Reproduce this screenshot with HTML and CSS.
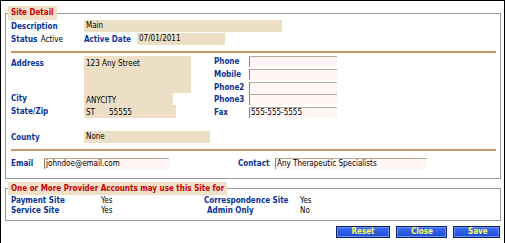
FILE: index.html
```html
<!DOCTYPE html>
<html>
<head>
<meta charset="utf-8">
<link rel="stylesheet" href="styles.css">
</head>
<body>
<div class="frame">
  <fieldset class="box box-detail">
    <legend class="legend">Site Detail</legend>
    <div class="content">
      <div class="top-grid">
        <span class="lbl">Description</span>
        <span class="fld tan f-desc">Main</span>
        <span class="status"><span class="lbl">Status</span> <span class="val">Active</span></span>
        <span class="date-wrap"><span class="lbl lbl-date">Active Date</span><span class="fld tan f-date">07/01/2011</span></span>
      </div>
      <div class="divider"></div>
      <div class="addr-section">
        <div class="addr-grid">
          <span class="lbl addr-lbl">Address</span>
          <span class="fld tan f-addr">123 Any Street</span>
          <span class="lbl bottom-lbl">City</span>
          <span class="fld tan f-city">ANYCITY</span>
          <span class="lbl bottom-lbl">State/Zip</span>
          <span class="fld tan f-state"><span class="st">ST</span><span>55555</span></span>
        </div>
        <div class="phone-grid">
          <span class="lbl">Phone</span><span class="fld inset f-phone"></span>
          <span class="lbl">Mobile</span><span class="fld inset f-phone"></span>
          <span class="lbl">Phone2</span><span class="fld inset f-phone"></span>
          <span class="lbl">Phone3</span><span class="fld inset f-phone"></span>
          <span class="lbl">Fax</span><span class="fld inset f-phone">555-555-5555</span>
        </div>
      </div>
      <div class="county-row">
        <span class="lbl">County</span>
        <span class="fld tan f-county">None</span>
      </div>
      <div class="divider divider-2"></div>
      <div class="contact-row">
        <span class="lbl">Email</span>
        <span class="fld inset f-email">johndoe@email.com</span>
        <span class="lbl lbl-contact">Contact</span>
        <span class="fld inset f-contact">Any Therapeutic Specialists</span>
      </div>
    </div>
  </fieldset>
  <fieldset class="box box-use">
    <legend class="legend">One or More Provider Accounts may use this Site for</legend>
    <div class="use-grid">
      <span class="lbl">Payment Site</span><span class="val">Yes</span>
      <span class="lbl">Correspondence Site</span><span class="val">Yes</span>
      <span class="lbl">Service Site</span><span class="val">Yes</span>
      <span class="lbl lbl-admin">Admin Only</span><span class="val">No</span>
    </div>
  </fieldset>
  <div class="buttons">
    <button class="btn">Reset</button>
    <button class="btn">Close</button>
    <button class="btn">Save</button>
  </div>
</div>
</body>
</html>
```
FILE: styles.css
```css
html, body {
  margin: 0;
  padding: 0;
  background: #fff;
}
.frame {
  width: 505px;
  height: 243px;
  box-sizing: border-box;
  border: 1px solid #000;
  border-bottom: none;
  padding: 5px 3px 0 4px;
  font-family: "DejaVu Sans Condensed", "DejaVu Sans", sans-serif;
  font-stretch: condensed;
  font-size: 8px;
  color: #000;
}
.box {
  margin: 0;
  padding: 0;
  border: 1px solid #9a9a9a;
  min-width: 0;
}
.legend {
  margin-left: 2px;
  padding: 0 3px;
  line-height: 14px;
  background: #efe0c8;
  color: #c80000;
  font-weight: bold;
}
.content {
  padding: 0 4px 9px 5px;
}
.lbl {
  font-weight: bold;
  color: #0a3399;
  white-space: nowrap;
}
.val {
  color: #000;
}
.fld {
  display: block;
  box-sizing: border-box;
  height: 12px;
  line-height: 12px;
  padding-left: 2px;
  white-space: nowrap;
  overflow: hidden;
}
.tan {
  background: #ecdfc6;
}
.inset {
  background: #fff5f5;
  border-top: 1px solid #b4ab98;
  border-left: 1px solid #8f8878;
  padding-left: 1px;
  line-height: 10px;
}
.top-grid {
  display: grid;
  grid-template-columns: 73px auto;
  grid-auto-rows: 12px;
  row-gap: 1px;
  align-items: center;
  justify-items: start;
}
.f-desc { width: 198px; }
.status .val { margin-left: 1px; }
.date-wrap {
  display: flex;
  align-items: center;
  height: 12px;
}
.lbl-date { width: 53px; }
.f-date { width: 88px; }
.divider {
  margin-top: 6px;
  height: 2px;
  background: #c9976c;
}
.addr-section {
  margin-top: 3px;
  display: flex;
  height: 62px;
}
.addr-grid {
  width: 203px;
  display: grid;
  grid-template-columns: 73px auto;
  grid-template-rows: 37px 12px 13px;
  justify-items: start;
}
.addr-lbl { padding-top: 3px; line-height: 9px; }
.f-addr {
  width: 107px;
  height: 37px;
  line-height: 9px;
  padding-top: 3px;
}
.bottom-lbl {
  align-self: end;
  line-height: 10px;
  padding-bottom: 1px;
}
.f-city { width: 89px; height: 12px; line-height: 10px; padding-top: 3px; }
.f-state { width: 92px; height: 13px; line-height: 10px; padding-top: 3px; display: flex; }
.st { width: 23px; }
.phone-grid {
  display: grid;
  grid-template-columns: 35px 88px;
  grid-auto-rows: 11px;
  row-gap: 1.75px;
  align-items: center;
}
.f-phone { height: 11px; }
.county-row {
  margin-top: 13px;
  display: grid;
  grid-template-columns: 73px 126px;
  height: 12px;
  align-items: center;
}
.divider-2 { margin-top: 6px; }
.contact-row {
  margin-top: 7px;
  display: grid;
  grid-template-columns: 33px 125px 69px 37px 152px;
  height: 11px;
  align-items: center;
}
.f-email, .f-contact { height: 11px; }
.lbl-contact { grid-column: 4; }
.box-use {
  margin-top: 3px;
}
.box-use .legend {
  line-height: 13px;
}
.use-grid {
  display: grid;
  grid-template-columns: 90px 103px 96px auto;
  grid-auto-rows: 10px;
  align-items: center;
  padding: 1px 0 4px 5px;
  line-height: 10px;
}
.lbl-admin { padding-left: 3px; }
.buttons {
  display: flex;
  justify-content: flex-end;
  gap: 6px;
  margin-top: 5px;
  padding-right: 1px;
}
.btn {
  height: 12px;
  padding: 0 14px;
  margin: 0;
  font-family: inherit;
  font-stretch: condensed;
  font-size: 8px;
  font-weight: bold;
  line-height: 10px;
  color: #ffff5a;
  background: linear-gradient(#3d6ef2, #1e4bd6);
  border: 1px solid #10205a;
  box-shadow: inset 0 0 0 1px #6a92ff;
  border-radius: 0;
}
.btn:nth-child(1) { width: 54px; }
.btn:nth-child(2) { width: 51px; }
.btn:nth-child(3) { width: 47px; }
```
